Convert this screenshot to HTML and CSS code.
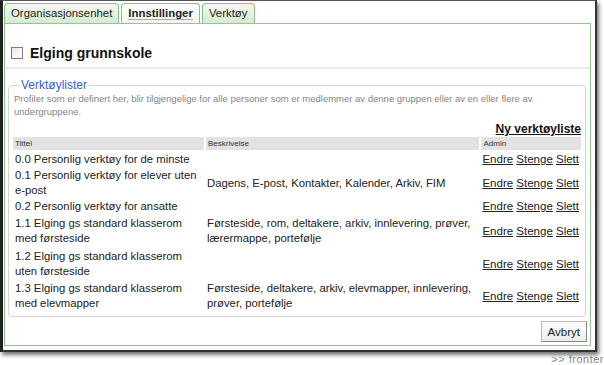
FILE: index.html
```html
<!DOCTYPE html>
<html>
<head>
<meta charset="utf-8">
<link rel="stylesheet" href="styles.css">
</head>
<body>
<div class="window">
  <div class="tabs">
    <div class="tab">Organisasjonsenhet</div>
    <div class="tab active"><span>Innstillinger</span></div>
    <div class="tab">Verktøy</div>
  </div>
  <div class="panel">
    <div class="group-row">
      <span class="checkbox"></span>
      <span class="group-name">Elging grunnskole</span>
    </div>
    <div class="sep"></div>
    <fieldset class="lists">
      <legend>Verktøylister</legend>
      <p class="intro">Profiler som er definert her, blir tilgjengelige for alle personer som er medlemmer av denne gruppen eller av en eller flere av undergruppene.</p>
      <div class="new-link"><a href="#">Ny verktøyliste</a></div>
      <table class="tools">
        <thead>
          <tr><th class="c-title">Tittel</th><th class="c-desc">Beskrivelse</th><th class="c-admin">Admin</th></tr>
        </thead>
        <tbody>
          <tr><td>0.0 Personlig verktøy for de minste</td><td></td><td class="admin"><a href="#">Endre</a> <a href="#">Stenge</a> <a href="#">Slett</a></td></tr>
          <tr><td>0.1 Personlig verktøy for elever uten e-post</td><td>Dagens, E-post, Kontakter, Kalender, Arkiv, FIM</td><td class="admin"><a href="#">Endre</a> <a href="#">Stenge</a> <a href="#">Slett</a></td></tr>
          <tr><td>0.2 Personlig verktøy for ansatte</td><td></td><td class="admin"><a href="#">Endre</a> <a href="#">Stenge</a> <a href="#">Slett</a></td></tr>
          <tr class="gap"><td>1.1 Elging gs standard klasserom med førsteside</td><td>Førsteside, rom, deltakere, arkiv, innlevering, prøver, lærermappe, portefølje</td><td class="admin"><a href="#">Endre</a> <a href="#">Stenge</a> <a href="#">Slett</a></td></tr>
          <tr class="gap"><td>1.2 Elging gs standard klasserom uten førsteside</td><td></td><td class="admin"><a href="#">Endre</a> <a href="#">Stenge</a> <a href="#">Slett</a></td></tr>
          <tr><td>1.3 Elging gs standard klasserom med elevmapper</td><td>Førsteside, deltakere, arkiv, elevmapper, innlevering, prøver, portefølje</td><td class="admin"><a href="#">Endre</a> <a href="#">Stenge</a> <a href="#">Slett</a></td></tr>
        </tbody>
      </table>
    </fieldset>
    <div class="actions"><button class="btn">Avbryt</button></div>
  </div>
</div>
<div class="watermark">&gt;&gt; fronter</div>
</body>
</html>
```

FILE: styles.css
```css
html, body {
  margin: 0;
  padding: 0;
  background: #fff;
}
body {
  font-family: "Liberation Sans", Arial, sans-serif;
  color: #222;
  position: relative;
  width: 604px;
  height: 365px;
  overflow: hidden;
}
.window {
  box-sizing: border-box;
  width: 597px;
  height: 352px;
  border-left: 3px solid #222;
  border-right: 2px solid #333;
  border-bottom: 2px solid #333;
  border-top: 1px solid #555;
  box-shadow: 2px 3px 4px rgba(0,0,0,0.55);
  background: #fff;
  padding: 2px 4px 4px 1px;
  display: flex;
  flex-direction: column;
}
.tabs {
  display: flex;
  gap: 2px;
  height: 20px;
  align-items: flex-end;
}
.tab {
  box-sizing: border-box;
  height: 20px;
  padding: 3px 6px 0 6px;
  font-size: 11.4px;
  border: 1px solid #86c286;
  border-bottom: none;
  border-radius: 4px 4px 0 0;
  background: linear-gradient(#f2f9f0, #d4ebcf);
  color: #222;
  white-space: nowrap;
}
.tab.active {
  background: linear-gradient(#ffffff, #eef7ec);
  font-weight: bold;
}
.tab.active span {
  border-bottom: 1px solid #f0a040;
}
.panel {
  flex: 1;
  border: 1px solid #90c890;
  display: flex;
  flex-direction: column;
}
.group-row {
  display: flex;
  align-items: center;
  height: 16px;
  margin-top: 21px;
  padding-left: 6px;
}
.checkbox {
  box-sizing: border-box;
  width: 12px;
  height: 12px;
  border: 1px solid #7a7a7a;
  background: linear-gradient(135deg, #e8e8e8, #fff);
  margin-right: 7px;
}
.group-name {
  font-size: 14px;
  font-weight: bold;
  color: #111;
}
.sep {
  height: 2px;
  background: #e6eaf0;
  margin-top: 6px;
}
.lists {
  margin: 9px 4px 0 3px;
  padding: 0 4px 5px 4px;
  border: 1px solid #d4d4d4;
  border-radius: 4px;
  min-width: 0;
}
.lists legend {
  color: #3a5fcd;
  font-size: 12px;
  padding: 0 2px;
  margin-left: 6px;
}
.intro {
  margin: 0;
  padding-left: 1px;
  font-size: 9.5px;
  line-height: 13px;
  color: #858585;
}
.new-link {
  text-align: right;
  margin-top: 4px;
  font-size: 12px;
  line-height: 15px;
  font-weight: bold;
}
.new-link a {
  color: #111;
}
.tools {
  width: 100%;
  border-collapse: collapse;
  margin-top: 0;
}
.tools th {
  background: #e2e2e2;
  font-size: 8px;
  line-height: 9px;
  font-weight: normal;
  text-align: left;
  color: #333;
  padding: 2px 2px 2px 2px;
  border-left: 2px solid #fff;
}
.tools th:first-child { border-left: none; }
.c-title { width: 187px; }
.c-admin { width: 94px; }
.tools td {
  font-size: 11.3px;
  line-height: 15px;
  padding: 1px 2px 0 2px;
  vertical-align: middle;
  color: #222;
}
.tools tr:first-child td { padding-top: 2px; }
.tools tr.gap td { padding-top: 2px; padding-bottom: 1px; }
.tools td:first-child { padding-right: 4px; }
.tools td.admin {
  white-space: nowrap;
  font-size: 11.5px;
}
.tools td.admin a {
  color: #222;
}
.actions {
  display: flex;
  justify-content: flex-end;
  padding: 4px 3px 0 0;
}
.btn {
  font-family: "Liberation Sans", Arial, sans-serif;
  font-size: 11.5px;
  color: #222;
  background: linear-gradient(#ffffff, #ececec);
  border: 1px solid #b8b8b8;
  border-right-color: #888;
  border-bottom-color: #888;
  padding: 2px 6px;
  height: 21px;
}
.watermark {
  position: absolute;
  right: 0;
  bottom: 0;
  font-size: 11px;
  color: #888;
  letter-spacing: 0.5px;
}
```
